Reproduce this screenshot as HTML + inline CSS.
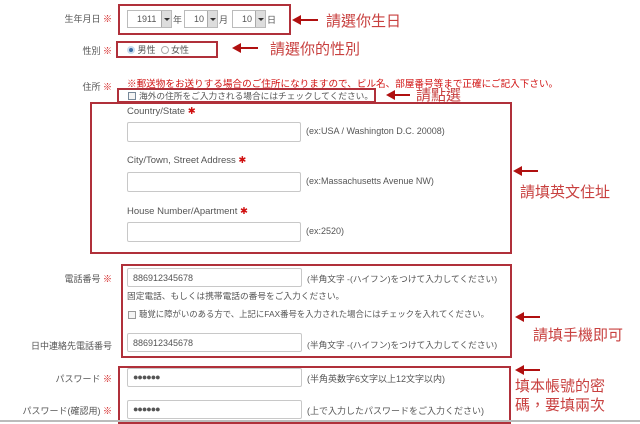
<!DOCTYPE html>
<html><head><meta charset="utf-8"><style>
*{margin:0;padding:0;box-sizing:border-box}
body{width:640px;height:422px;background:#fff;position:relative;overflow:hidden;font-family:"Liberation Sans","Noto Sans CJK JP",sans-serif;font-size:9px;color:#555}
.a{position:absolute;white-space:nowrap}
.box{position:absolute;border:2px solid #b0303a}
.inp{position:absolute;border:1px solid #c8c8c8;background:#fff;border-radius:2px;font-size:9px;color:#555;padding:4px 0 0 5px}
.lab{position:absolute;text-align:right;white-space:nowrap;width:110px}
.st{color:#d01010}
.red{color:#c8403f;font-family:"Liberation Sans","Noto Sans CJK TC",sans-serif;font-size:15px}
.arr{position:absolute;height:2px;background:#b01010}
.arr:before{content:"";position:absolute;left:-8px;top:-4px;border-right:9px solid #b01010;border-top:5px solid transparent;border-bottom:5px solid transparent}
.sel{position:absolute;height:18px;border:1px solid #bbb;background:#fff;font-size:9px;padding:3px 0 0 9px}
.sel i{position:absolute;right:0;top:0;width:10px;height:16px;background:#ddd;border-left:1px solid #aaa}
.sel i:after{content:"";position:absolute;left:2px;top:7px;border-top:3px solid #333;border-left:3px solid transparent;border-right:3px solid transparent}
.cb{position:absolute;width:8px;height:8px;border:1px solid #999;background:#f4f4f4}
</style></head><body>
<div class="lab" style="left:0;top:12px;width:112px">生年月日 <span class="st">※</span></div>
<div class="box" style="left:118px;top:4px;width:173px;height:31px"></div>
<div class="sel" style="left:127px;top:10px;width:45px">1911<i></i></div><div class="a" style="left:173px;top:13px">年</div>
<div class="sel" style="left:184px;top:10px;width:34px">10<i></i></div><div class="a" style="left:219px;top:13px">月</div>
<div class="sel" style="left:232px;top:10px;width:34px">10<i></i></div><div class="a" style="left:267px;top:13px">日</div>
<div class="arr" style="left:300px;top:19px;width:18px"></div>
<div class="a red" style="left:326px;top:10px">請選你生日</div>

<div class="lab" style="left:0;top:44px;width:112px">性別 <span class="st">※</span></div>
<div class="box" style="left:116px;top:41px;width:102px;height:17px"></div>
<div class="a" style="left:127px;top:43px"><span style="display:inline-block;width:8px;height:8px;border-radius:50%;background:#3a6fa8;border:2px solid #cde;vertical-align:-1px"></span> 男性 &nbsp;<span style="display:inline-block;width:8px;height:8px;border-radius:50%;border:1px solid #aaa;vertical-align:-1px"></span> 女性</div>
<div class="arr" style="left:240px;top:47px;width:18px"></div>
<div class="a red" style="left:270px;top:38px">請選你的性別</div>

<div class="lab" style="left:0;top:80px;width:112px">住所 <span class="st">※</span></div>
<div class="a" style="left:127px;top:76px;color:#d01010;font-size:9.6px">※郵送物をお送りする場合のご住所になりますので、ビル名、部屋番号等まで正確にご記入下さい。</div>
<div class="box" style="left:117px;top:88px;width:259px;height:15px"></div>
<div class="cb" style="left:128px;top:92px;border-color:#789"></div>
<div class="a" style="left:139px;top:89px;font-size:8.7px">海外の住所をご入力される場合にはチェックしてください。</div>
<div class="arr" style="left:394px;top:94px;width:16px"></div>
<div class="a red" style="left:416px;top:84px">請點選</div>

<div class="box" style="left:90px;top:102px;width:422px;height:152px"></div>
<div class="a" style="left:127px;top:106px;font-size:9.5px">Country/State <span class="st">✱</span></div>
<div class="inp" style="left:127px;top:122px;width:174px;height:20px"></div>
<div class="a" style="left:306px;top:126px">(ex:USA / Washington D.C. 20008)</div>
<div class="a" style="left:127px;top:155px;font-size:9.5px">City/Town, Street Address <span class="st">✱</span></div>
<div class="inp" style="left:127px;top:172px;width:174px;height:20px"></div>
<div class="a" style="left:306px;top:176px">(ex:Massachusetts Avenue NW)</div>
<div class="a" style="left:127px;top:206px;font-size:9.5px">House Number/Apartment <span class="st">✱</span></div>
<div class="inp" style="left:127px;top:222px;width:174px;height:20px"></div>
<div class="a" style="left:306px;top:226px">(ex:2520)</div>
<div class="arr" style="left:521px;top:170px;width:17px"></div>
<div class="a red" style="left:520px;top:181px">請填英文住址</div>

<div class="lab" style="left:0;top:272px;width:112px">電話番号 <span class="st">※</span></div>
<div class="box" style="left:121px;top:264px;width:391px;height:94px"></div>
<div class="inp" style="left:127px;top:268px;width:175px;height:19px">886912345678</div>
<div class="a" style="left:307px;top:272px;font-size:8.7px">(半角文字 -(ハイフン)をつけて入力してください)</div>
<div class="a" style="left:127px;top:289px;font-size:8.7px">固定電話、もしくは携帯電話の番号をご入力ください。</div>
<div class="cb" style="left:128px;top:311px"></div>
<div class="a" style="left:139px;top:308px;font-size:8.4px">聴覚に障がいのある方で、上記にFAX番号を入力された場合にはチェックを入れてください。</div>
<div class="lab" style="left:0;top:339px;width:112px">日中連絡先電話番号</div>
<div class="inp" style="left:127px;top:333px;width:175px;height:19px">886912345678</div>
<div class="a" style="left:307px;top:338px;font-size:8.7px">(半角文字 -(ハイフン)をつけて入力してください)</div>
<div class="arr" style="left:523px;top:316px;width:17px"></div>
<div class="a red" style="left:533px;top:324px">請填手機即可</div>

<div class="lab" style="left:0;top:372px;width:112px">パスワード <span class="st">※</span></div>
<div class="box" style="left:118px;top:366px;width:393px;height:58px"></div>
<div class="inp" style="left:127px;top:368px;width:175px;height:19px;font-weight:bold;letter-spacing:-1px;padding-top:3px">●●●●●●</div>
<div class="a" style="left:307px;top:372px">(半角英数字6文字以上12文字以内)</div>
<div class="lab" style="left:0;top:404px;width:112px">パスワード(確認用) <span class="st">※</span></div>
<div class="inp" style="left:127px;top:400px;width:175px;height:19px;font-weight:bold;letter-spacing:-1px;padding-top:3px">●●●●●●</div>
<div class="a" style="left:307px;top:404px">(上で入力したパスワードをご入力ください)</div>
<div class="arr" style="left:523px;top:369px;width:17px"></div>
<div class="a red" style="left:515px;top:377px;line-height:19px">填本帳號的密<br>碼，要填兩次</div>
<div style="position:absolute;left:0;top:420px;width:640px;height:2px;background:#bbb"></div>
</body></html>
